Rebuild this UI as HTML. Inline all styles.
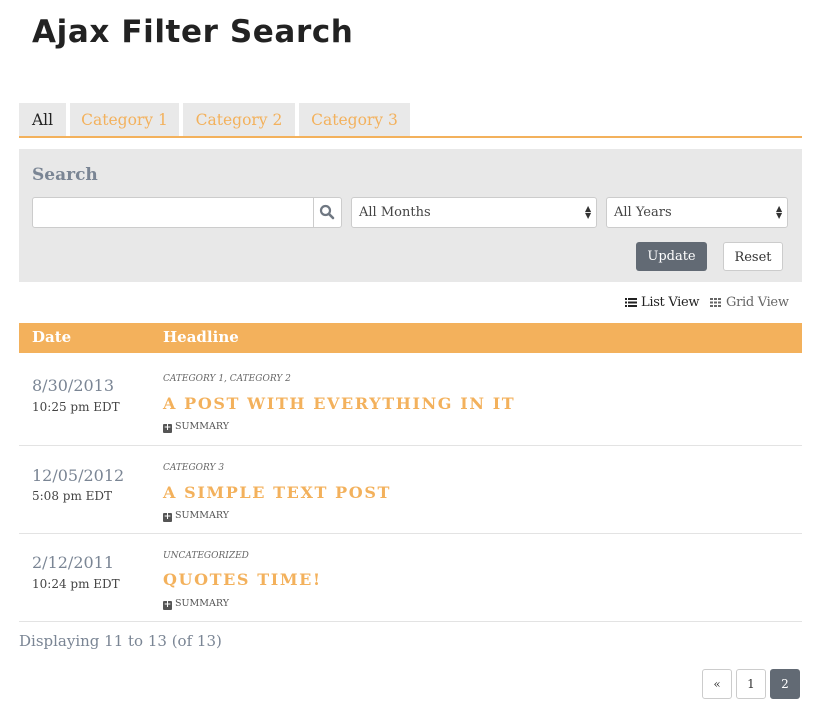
<!DOCTYPE html>
<html><head><style>
body{margin:0;width:832px;height:727px;background:#fff;font-family:"DejaVu Serif","Liberation Serif",serif;position:relative;overflow:hidden}
.a{position:absolute}
h1{position:absolute;left:32px;top:14px;margin:0;font-family:"DejaVu Sans","Liberation Sans",sans-serif;font-weight:bold;font-size:31px;color:#222;letter-spacing:0.6px}
.tab{position:absolute;top:103px;height:34px;background:#e9e9e9;color:#f3b15c;font-size:15.5px;line-height:34px;text-align:center}
.box{position:absolute;left:19px;top:149px;width:783px;height:133px;background:#e8e8e8}
.inp{position:absolute;background:#fff;border:1px solid #ccc;border-radius:3px;box-sizing:border-box;font-size:13px;color:#444;line-height:29px;padding-left:7px}
.btn{position:absolute;border-radius:3px;font-size:13px;line-height:29px;text-align:center;box-sizing:border-box}
.row{position:absolute;left:19px;width:783px;border-bottom:1px solid #e3e3e3}
.d{position:absolute;left:13px;font-size:16px;color:#7a8594}
.t{position:absolute;left:13px;font-size:12px;color:#444}
.c{position:absolute;left:144px;font-size:9px;font-style:italic;color:#666}
.h{position:absolute;left:144px;font-size:16px;font-weight:bold;color:#f3b15c;letter-spacing:1.6px}
.s{position:absolute;left:144px;font-size:9.5px;color:#555}
.s b{display:inline-block;width:9px;height:9px;background:#555;border-radius:1px;color:#fff;font-size:9px;line-height:9px;text-align:center;margin-right:3px;vertical-align:-1px}
.pg{position:absolute;top:669px;width:30px;height:30px;border:1px solid #ccc;border-radius:3px;box-sizing:border-box;font-size:12px;line-height:28px;text-align:center;color:#333}
</style></head><body>
<h1>Ajax Filter Search</h1>
<div class="tab" style="left:19px;width:47px;color:#222">All</div>
<div class="tab" style="left:70px;width:109px">Category 1</div>
<div class="tab" style="left:183px;width:112px">Category 2</div>
<div class="tab" style="left:299px;width:111px">Category 3</div>
<div class="a" style="left:19px;top:136px;width:783px;height:2px;background:#f3b15c"></div>
<div class="box"></div>
<div class="a" style="left:32px;top:165px;font-size:17px;font-weight:bold;color:#7a8594">Search</div>
<div class="inp" style="left:32px;top:197px;width:310px;height:31px"></div>
<div class="a" style="left:313px;top:198px;width:1px;height:29px;background:#ccc"></div>
<svg class="a" style="left:319px;top:204px" width="16" height="16" viewBox="0 0 16 16"><circle cx="6.5" cy="6.5" r="4.5" fill="none" stroke="#6f7782" stroke-width="2.2"/><path d="M10 10l4 4" stroke="#6f7782" stroke-width="2.6" stroke-linecap="round"/></svg>
<div class="inp" style="left:351px;top:197px;width:246px;height:31px">All Months</div>
<div class="a" style="left:585px;top:205px;font-size:8px;color:#333;line-height:7px">▲<br>▼</div>
<div class="inp" style="left:606px;top:197px;width:182px;height:31px">All Years</div>
<div class="a" style="left:776px;top:205px;font-size:8px;color:#333;line-height:7px">▲<br>▼</div>
<div class="btn" style="left:636px;top:242px;width:71px;height:29px;background:#626a74;color:#fff">Update</div>
<div class="btn" style="left:723px;top:242px;width:60px;height:29px;background:#fff;border:1px solid #ccc;color:#333">Reset</div>
<svg class="a" style="left:625px;top:297px" width="12" height="11" viewBox="0 0 12 11"><g fill="#222"><rect x="0" y="1" width="2" height="2"/><rect x="3" y="1" width="9" height="2"/><rect x="0" y="4.5" width="2" height="2"/><rect x="3" y="4.5" width="9" height="2"/><rect x="0" y="8" width="2" height="2"/><rect x="3" y="8" width="9" height="2"/></g></svg>
<div class="a" style="left:641px;top:295px;font-size:13px;color:#222;letter-spacing:-0.3px">List View</div>
<svg class="a" style="left:710px;top:297px" width="12" height="11" viewBox="0 0 12 11"><g fill="#666"><rect x="0" y="1" width="3" height="2"/><rect x="4" y="1" width="3" height="2"/><rect x="8" y="1" width="3" height="2"/><rect x="0" y="4.5" width="3" height="2"/><rect x="4" y="4.5" width="3" height="2"/><rect x="8" y="4.5" width="3" height="2"/><rect x="0" y="8" width="3" height="2"/><rect x="4" y="8" width="3" height="2"/><rect x="8" y="8" width="3" height="2"/></g></svg>
<div class="a" style="left:726px;top:295px;font-size:13px;color:#666;letter-spacing:-0.3px">Grid View</div>
<div class="a" style="left:19px;top:323px;width:783px;height:30px;background:#f3b15c"></div>
<div class="a" style="left:32px;top:328px;font-size:15px;font-weight:bold;color:#fff">Date</div>
<div class="a" style="left:163px;top:328px;font-size:15px;font-weight:bold;color:#fff">Headline</div>
<div class="row" style="top:353px;height:92px">
<div class="d" style="top:23px">8/30/2013</div><div class="t" style="top:47px">10:25 pm EDT</div>
<div class="c" style="top:21px">CATEGORY 1, CATEGORY 2</div><div class="h" style="top:41px">A POST WITH EVERYTHING IN IT</div><div class="s" style="top:68px"><b>+</b>SUMMARY</div></div>
<div class="row" style="top:446px;height:87px">
<div class="d" style="top:20px">12/05/2012</div><div class="t" style="top:43px">5:08 pm EDT</div>
<div class="c" style="top:17px">CATEGORY 3</div><div class="h" style="top:37px">A SIMPLE TEXT POST</div><div class="s" style="top:64px"><b>+</b>SUMMARY</div></div>
<div class="row" style="top:534px;height:87px">
<div class="d" style="top:19px">2/12/2011</div><div class="t" style="top:43px">10:24 pm EDT</div>
<div class="c" style="top:17px">UNCATEGORIZED</div><div class="h" style="top:36px">QUOTES TIME!</div><div class="s" style="top:64px"><b>+</b>SUMMARY</div></div>
<div class="a" style="left:19px;top:632px;font-size:15px;color:#7a8594">Displaying 11 to 13 (of 13)</div>
<div class="pg" style="left:702px">«</div>
<div class="pg" style="left:736px">1</div>
<div class="pg" style="left:770px;background:#626a74;border-color:#626a74;color:#fff">2</div>
</body></html>
